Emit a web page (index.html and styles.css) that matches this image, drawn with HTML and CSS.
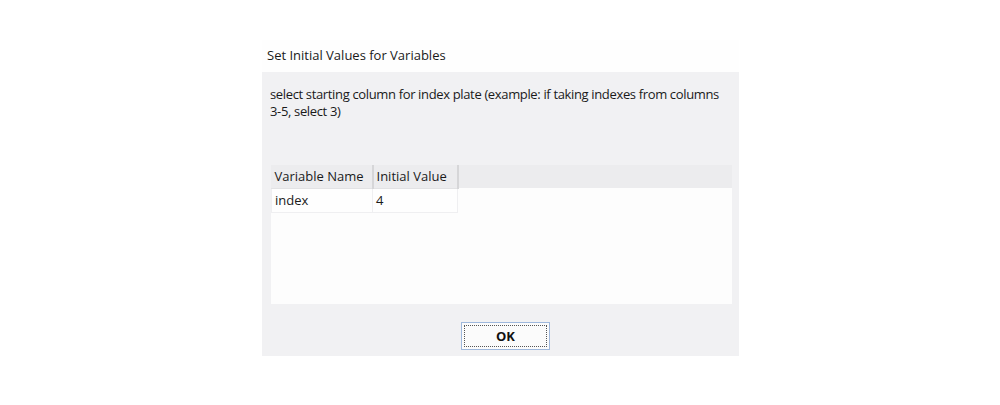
FILE: index.html
```html
<!DOCTYPE html>
<html lang="en">
<head>
  <meta charset="UTF-8" />
  <title>Set Initial Values for Variables</title>
  <link rel="stylesheet" href="styles.css">
</head>
<body>
  <div class="dialog">
    <div class="title">Set Initial Values for Variables</div>
    <div class="panel">
      <p class="desc">select starting column for index plate (example: if taking indexes from columns 3-5, select 3)</p>
      <div class="grid">
        <table>
          <tr>
            <th class="col-name">Variable Name</th>
            <th class="col-value">Initial Value</th>
          </tr>
          <tr>
            <td>index</td>
            <td>4</td>
          </tr>
        </table>
      </div>
      <div class="actions">
        <button class="ok"><span>OK</span></button>
      </div>
    </div>
  </div>
</body>
</html>
```

FILE: styles.css
```css
* { margin: 0; padding: 0; box-sizing: border-box; }
body {
  background: #ffffff;
  font-family: "Open Sans", "Liberation Sans", sans-serif;
  font-size: 13px;
  color: #1a1a1a;
}
.dialog {
  width: 477px;
  margin: 40px 0 0 262px;
}
.title {
  height: 32px;
  padding: 6px 0 0 5px;
  background: #fefefe;
}
.panel {
  background: #f1f1f3;
  height: 284px;
  padding: 14px 7px 6px 8px;
  display: flex;
  flex-direction: column;
}
.desc {
  line-height: 17px;
  width: 458px;
  letter-spacing: -0.35px;
}
.grid {
  margin-top: 45px;
  margin-left: 1px;
  height: 139px;
  background: #fdfdfd;
  background-image: linear-gradient(#ececee, #ececee);
  background-size: 100% 23px;
  background-repeat: no-repeat;
}
table {
  border-collapse: collapse;
}
th, td {
  text-align: left;
  font-weight: normal;
  padding: 0 3px;
  white-space: nowrap;
}
th {
  height: 23px;
  background: #ececee;
  border-right: 2px solid #d6d6d8;
  border-bottom: 1px solid #e2e2e4;
}
td {
  height: 24px;
  background: #fefefe;
  border: 1px solid #efeff1;
}
.col-name { width: 101px; }
.col-value { width: 85px; }
.actions {
  margin-top: auto;
  display: flex;
  justify-content: center;
  padding-left: 9px;
}
.ok {
  width: 89px;
  min-width: 89px;
  height: 28px;
  border: 1px solid #9fb8dc;
  background: #fbfbfb;
  padding: 2px;
  font-family: "Open Sans", "Liberation Sans", sans-serif;
  font-size: 13px;
  font-weight: bold;
  color: #111;
}
.ok span {
  display: block;
  height: 100%;
  border: 1px dotted #555;
  line-height: 20px;
}
```
